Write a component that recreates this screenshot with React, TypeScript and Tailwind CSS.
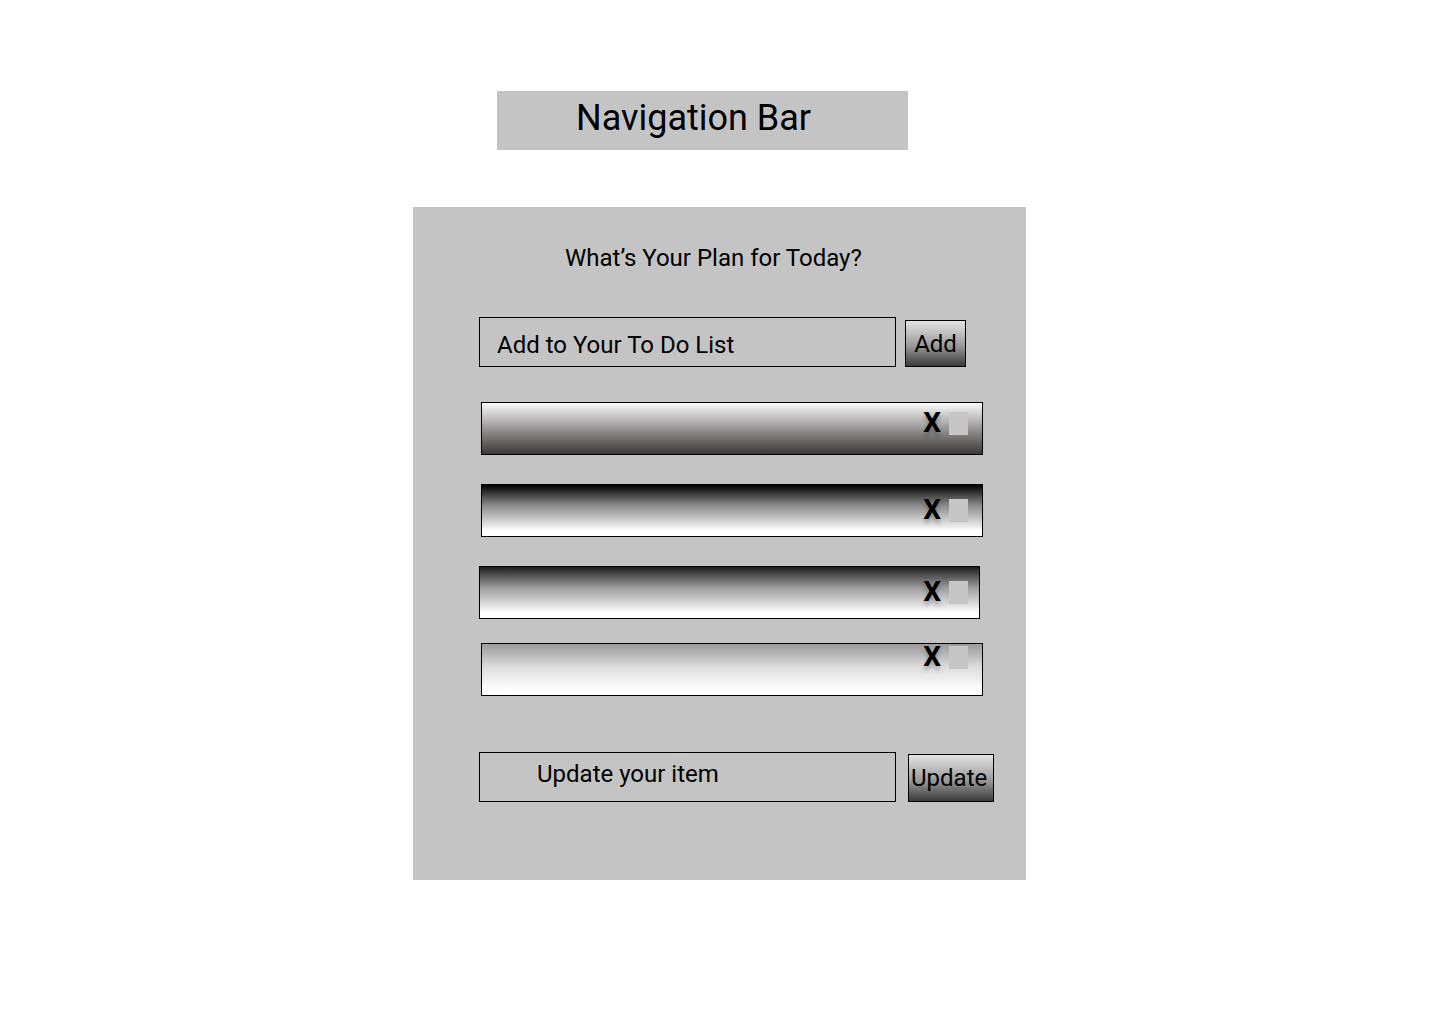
import React from "react";

type Item = {
  id: number;
  bg: string;
  pad: string;
  indent: string;
  width: string;
  gap: string;
  right: string;
};

const items: Item[] = [
  {
    id: 1,
    bg: "bg-[linear-gradient(180deg,#fbfbfb_0%,#8f8c8c_55%,#3b3737_100%)]",
    pad: "pt-[9px]",
    indent: "ml-[68px]",
    width: "w-[502px]",
    gap: "mt-[35px]",
    right: "pr-[14px]",
  },
  {
    id: 2,
    bg: "bg-[linear-gradient(180deg,#000000_0%,#8a8a8a_40%,#ffffff_90%)]",
    pad: "pt-[14px]",
    indent: "ml-[68px]",
    width: "w-[502px]",
    gap: "mt-[29px]",
    right: "pr-[14px]",
  },
  {
    id: 3,
    bg: "bg-[linear-gradient(180deg,#1e1e1e_0%,#9a9a9a_40%,#ffffff_90%)]",
    pad: "pt-[14px]",
    indent: "ml-[66px]",
    width: "w-[501px]",
    gap: "mt-[29px]",
    right: "pr-[11px]",
  },
  {
    id: 4,
    bg: "bg-[linear-gradient(180deg,#9a9a9a_0%,#dcdcdc_45%,#ffffff_90%)]",
    pad: "pt-[2px]",
    indent: "ml-[68px]",
    width: "w-[502px]",
    gap: "mt-[24px]",
    right: "pr-[14px]",
  },
];

function TodoRow({ item }: { item: Item }) {
  return (
    <div
      className={`${item.gap} ${item.indent} ${item.width} h-[53px] box-border border border-black ${item.bg} ${item.pad} ${item.right} flex justify-end items-start`}
    >
      <span className="mt-[-3px] mr-[8px] text-[28px] leading-none font-bold text-black [text-shadow:0px_4px_4px_rgba(0,0,0,0.25)]">
        X
      </span>
      <span className="w-[19px] h-[23px] bg-[#c6c6c6]" />
    </div>
  );
}

export default function App() {
  return (
    <div className="min-h-[1024px] bg-white pt-[91px] font-['Roboto',sans-serif] text-black">
      {/* Navigation */}
      <nav className="ml-[497px] w-[411px] h-[59px] bg-[#c4c4c4] pl-[79px] pt-[6px]">
        <span className="text-[36px] leading-[42px]">Navigation Bar</span>
      </nav>

      {/* Todo panel */}
      <main className="mt-[57px] ml-[413px] w-[613px] h-[673px] bg-[#c4c4c4] pt-[37px] flex flex-col">
        <h1 className="pl-[152px] text-[24px] leading-[28px] font-normal">
          What’s Your Plan for Today?
        </h1>

        <div className="mt-[45px] ml-[66px] flex items-start">
          <div className="w-[417px] h-[50px] box-border border border-black pl-[17px] pt-[13px] text-[24px] leading-[28px]">
            Add to Your To Do List
          </div>
          <button className="ml-[9px] mt-[3px] w-[61px] h-[47px] box-border border border-black bg-[linear-gradient(180deg,#e4e4e4_0%,#9a9a9a_55%,#3a3a3a_100%)] pt-[9px] text-[24px] leading-[28px] text-center flex justify-center items-start">
            Add
          </button>
        </div>

        {items.map((item) => (
          <TodoRow key={item.id} item={item} />
        ))}

        <div className="mt-[56px] ml-[66px] flex items-start">
          <div className="w-[417px] h-[50px] box-border border border-black pl-[57px] pt-[7px] text-[24px] leading-[28px]">
            Update your item
          </div>
          <button className="ml-[12px] mt-[2px] w-[86px] h-[48px] box-border border border-black bg-[linear-gradient(180deg,#e4e4e4_0%,#9a9a9a_55%,#3a3a3a_100%)] pl-[2px] pt-[9px] text-[24px] leading-[28px] flex items-start">
            Update
          </button>
        </div>
      </main>
    </div>
  );
}
